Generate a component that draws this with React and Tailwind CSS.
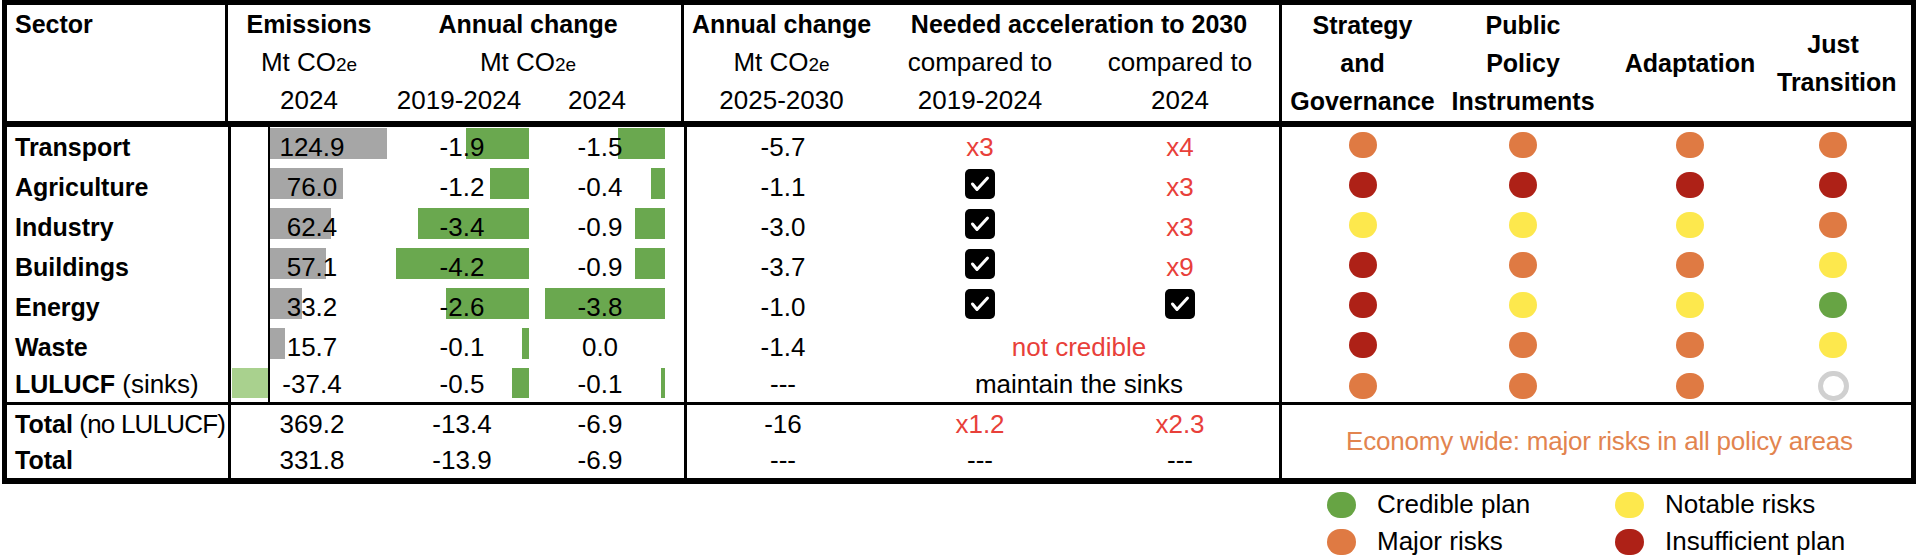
import React from "react";

const dotColor = {
  o: "bg-[#df7a43]",
  r: "bg-[#ae2117]",
  y: "bg-[#fde84d]",
  g: "bg-[#67a444]",
};

const sectors = [
  { name: "Transport", em: "124.9", emBar: 117, a: "-1.9", aBar: 63, b: "-1.5", bBar: 47, c: "-5.7", acc1: "x3", acc2: "x4", dots: ["o", "o", "o", "o"] },
  { name: "Agriculture", em: "76.0", emBar: 73, a: "-1.2", aBar: 39, b: "-0.4", bBar: 14, c: "-1.1", acc1: "ok", acc2: "x3", dots: ["r", "r", "r", "r"] },
  { name: "Industry", em: "62.4", emBar: 61, a: "-3.4", aBar: 111, b: "-0.9", bBar: 30, c: "-3.0", acc1: "ok", acc2: "x3", dots: ["y", "y", "y", "o"] },
  { name: "Buildings", em: "57.1", emBar: 56, a: "-4.2", aBar: 133, b: "-0.9", bBar: 30, c: "-3.7", acc1: "ok", acc2: "x9", dots: ["r", "o", "o", "y"] },
  { name: "Energy", em: "33.2", emBar: 32, a: "-2.6", aBar: 83, b: "-3.8", bBar: 120, c: "-1.0", acc1: "ok", acc2: "ok", dots: ["r", "y", "y", "g"] },
  { name: "Waste", em: "15.7", emBar: 15, a: "-0.1", aBar: 7, b: "0.0", bBar: 0, c: "-1.4", span: "not credible", spanRed: true, dots: ["r", "o", "o", "y"] },
  { name: "LULUCF", note: "(sinks)", em: "-37.4", emBar: 0, negBar: 36, a: "-0.5", aBar: 17, b: "-0.1", bBar: 4, c: "---", span: "maintain the sinks", dots: ["o", "o", "o", "ring"] },
];

function Check() {
  return (
    <svg width="30" height="30" viewBox="0 0 30 30">
      <rect width="30" height="30" rx="5" fill="#000" />
      <path d="M7.5 15l4.5 5.5 10.5-11.5" fill="none" stroke="#fff" strokeWidth="3" strokeLinecap="round" strokeLinejoin="round" />
    </svg>
  );
}

function Acc({ v }) {
  if (v === "ok") {
    return (
      <div className="flex justify-center pt-[2px]">
        <Check />
      </div>
    );
  }
  return <div className="text-center text-[#e8403a]">{v}</div>;
}

function Dot({ k, last }) {
  if (k === "ring") {
    return (
      <div className="flex justify-center pt-[4px]">
        <span className="w-[31px] h-[30px] rounded-full border-[5px] border-[#d0d0d0]" />
      </div>
    );
  }
  return (
    <div className={`flex justify-center ${last ? "pt-[6px]" : "pt-[5px]"}`}>
      <span className={`w-[28px] h-[26px] rounded-full ${dotColor[k]}`} />
    </div>
  );
}

function CO2e() {
  return (
    <>
      Mt CO<span className="text-[19px]">2e</span>
    </>
  );
}

function BodyRow({ r, last }) {
  const barH = last ? "h-[30px]" : "h-[31px]";
  return (
    <div className={`flex ${last ? "h-[35px] leading-[35px]" : "h-[40px] leading-[40px]"}`}>
      <div className="w-[224px] border-r-[3px] border-black pl-[8px] text-[25px] font-bold whitespace-nowrap">
        {r.name}
        {r.note && <span className="font-normal text-[26px]"> {r.note}</span>}
      </div>

      <div className="relative w-[162px] flex">
        <div className="w-[37px] flex justify-end pt-[1px]">
          {r.negBar ? <div style={{ width: r.negBar }} className={`${barH} bg-[#a9d18e]`} /> : null}
        </div>
        <div className="w-[2px] bg-black" />
        <div className="flex-1 pt-[1px]">
          {r.emBar ? <div style={{ width: r.emBar }} className="h-[31px] bg-[#a6a6a6]" /> : null}
        </div>
        <span className="absolute inset-0 text-center">{r.em}</span>
      </div>

      <div className="relative w-[138px] flex justify-end pr-[2px] pt-[1px]">
        <div style={{ width: r.aBar }} className={`${barH} bg-[#6aa84f]`} />
        <span className="absolute inset-0 text-center">{r.a}</span>
      </div>

      <div className="relative w-[138px] flex justify-end pr-[4px] pt-[1px]">
        {r.bBar ? <div style={{ width: r.bBar }} className={`${barH} bg-[#6aa84f]`} /> : null}
        <span className="absolute inset-0 text-center">{r.b}</span>
      </div>
      <div className="w-[15px]" />

      <div className="w-[195px] border-l-[3px] border-black text-center">{r.c}</div>
      {r.span ? (
        <div className={`w-[400px] text-center ${r.spanRed ? "text-[#e8403a]" : ""}`}>{r.span}</div>
      ) : (
        <>
          <div className="w-[202px]">
            <Acc v={r.acc1} />
          </div>
          <div className="w-[198px]">
            <Acc v={r.acc2} />
          </div>
        </>
      )}

      <div className="w-[164px] border-l-[3px] border-black">
        <Dot k={r.dots[0]} last={last} />
      </div>
      <div className="w-[160px]">
        <Dot k={r.dots[1]} last={last} />
      </div>
      <div className="w-[174px]">
        <Dot k={r.dots[2]} last={last} />
      </div>
      <div className="w-[112px]">
        <Dot k={r.dots[3]} last={last} />
      </div>
      <div className="w-[22px]" />
    </div>
  );
}

function TotalRow({ label, note, em, a, b, c, x1, x2, h }) {
  return (
    <div className={`flex ${h}`}>
      <div className="w-[224px] border-r-[3px] border-black pl-[8px] text-[25px] font-bold whitespace-nowrap overflow-hidden">
        {label}
        {note && <span className="font-normal text-[26px] tracking-[-0.8px]"> {note}</span>}
      </div>
      <div className="w-[162px] text-center">{em}</div>
      <div className="w-[138px] text-center">{a}</div>
      <div className="w-[138px] text-center">{b}</div>
      <div className="w-[15px]" />
      <div className="w-[195px] border-l-[3px] border-black text-center">{c}</div>
      <div className={`w-[202px] text-center ${x1 === "---" ? "" : "text-[#e8403a]"}`}>{x1}</div>
      <div className={`w-[198px] text-center ${x2 === "---" ? "" : "text-[#e8403a]"}`}>{x2}</div>
    </div>
  );
}

function Legend({ color, label }) {
  return (
    <div className="flex items-center gap-[21px]">
      <span className={`w-[29px] h-[26px] rounded-full ${color}`} />
      <span>{label}</span>
    </div>
  );
}

export default function App() {
  return (
    <div className="w-[1920px] h-[555px] overflow-hidden bg-white text-black text-[26px] font-['Liberation_Sans',Arial,sans-serif]">
      <div className="ml-[2px] w-[1914px] border-[5px] border-b-[6px] border-black">
        {/* header */}
        <div className="flex h-[122px] border-b-[6px] border-black leading-[38px]">
          <div className="w-[224px] border-r-[3px] border-black pl-[8px] text-[25px] font-bold">Sector</div>

          <div className="grid grid-cols-[162px_138px_138px_15px] auto-rows-[38px] text-center">
            <div className="text-[25px] font-bold">Emissions</div>
            <div className="col-span-2 text-[25px] font-bold">Annual change</div>
            <div />
            <div><CO2e /></div>
            <div className="col-span-2"><CO2e /></div>
            <div />
            <div>2024</div>
            <div>2019-2024</div>
            <div>2024</div>
            <div />
          </div>

          <div className="grid grid-cols-[195px_202px_198px] auto-rows-[38px] text-center border-l-[3px] border-black">
            <div className="text-[25px] font-bold">Annual change</div>
            <div className="col-span-2 text-[25px] font-bold">Needed acceleration to 2030</div>
            <div><CO2e /></div>
            <div>compared to</div>
            <div>compared to</div>
            <div>2025-2030</div>
            <div>2019-2024</div>
            <div>2024</div>
          </div>

          <div className="flex text-center text-[25px] font-bold">
            <div className="w-[164px] border-l-[3px] border-black flex flex-col justify-center">
              <span>Strategy</span>
              <span>and</span>
              <span>Governance</span>
            </div>
            <div className="w-[160px] flex flex-col justify-center">
              <span>Public</span>
              <span>Policy</span>
              <span>Instruments</span>
            </div>
            <div className="w-[174px] flex flex-col justify-center">
              <span>Adaptation</span>
            </div>
            <div className="w-[112px] flex flex-col justify-center">
              <span>Just</span>
              <span>Transition</span>
            </div>
            <div className="w-[22px]" />
          </div>
        </div>

        {/* body */}
        <div>
          {sectors.map((r, i) => (
            <BodyRow key={r.name} r={r} last={i === sectors.length - 1} />
          ))}
        </div>

        {/* totals */}
        <div className="flex border-t-[3px] border-black">
          <div className="flex flex-col">
            <TotalRow h="h-[38px] leading-[38px]" label="Total" note="(no LULUCF)" em="369.2" a="-13.4" b="-6.9" c="-16" x1="x1.2" x2="x2.3" />
            <TotalRow h="h-[35px] leading-[35px]" label="Total" em="331.8" a="-13.9" b="-6.9" c="---" x1="---" x2="---" />
          </div>
          <div className="w-[632px] border-l-[3px] border-black flex items-center justify-center pl-[6px] text-[#e2844f] tracking-[-0.2px]">
            Economy wide: major risks in all policy areas
          </div>
        </div>
      </div>

      {/* legend */}
      <div className="pl-[1327px] pt-[2px] grid grid-cols-[288px_auto] auto-rows-[37px] leading-[37px]">
        <Legend color="bg-[#67a444]" label="Credible plan" />
        <Legend color="bg-[#fde84d]" label="Notable risks" />
        <Legend color="bg-[#df7a43]" label="Major risks" />
        <Legend color="bg-[#ae2117]" label="Insufficient plan" />
      </div>
    </div>
  );
}
